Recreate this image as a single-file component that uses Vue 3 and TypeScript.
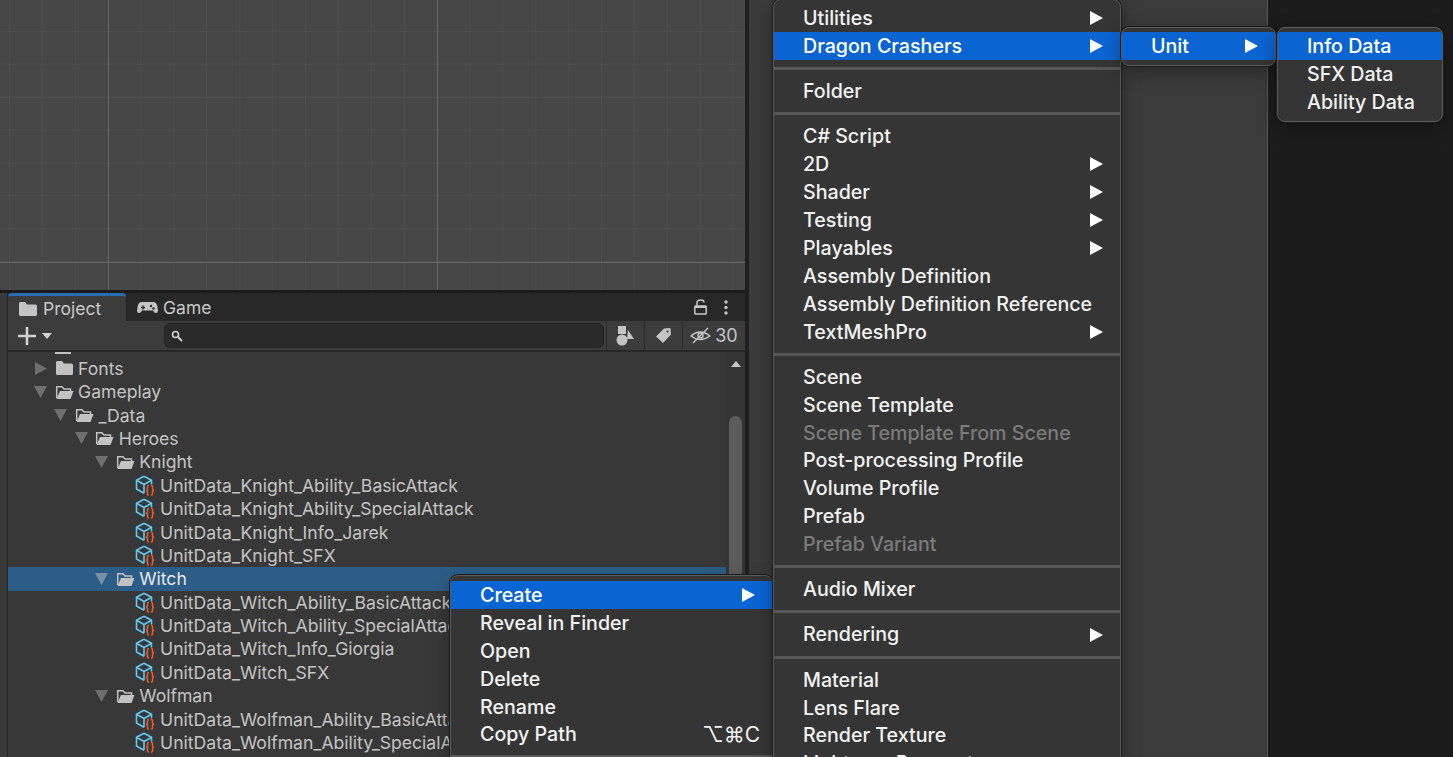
<script setup lang="ts">
type Row = { label: string; depth: number; kind: 'closed' | 'open' | 'asset'; arrow?: 'right' | 'down'; selected?: boolean };
type Item = { label?: string; sep?: boolean; arrow?: boolean; active?: boolean; disabled?: boolean; shortcut?: string };

const rows: Row[] = [
  { label: 'Fonts', depth: 0, kind: 'closed', arrow: 'right' },
  { label: 'Gameplay', depth: 0, kind: 'open', arrow: 'down' },
  { label: '_Data', depth: 1, kind: 'open', arrow: 'down' },
  { label: 'Heroes', depth: 2, kind: 'open', arrow: 'down' },
  { label: 'Knight', depth: 3, kind: 'open', arrow: 'down' },
  { label: 'UnitData_Knight_Ability_BasicAttack', depth: 4, kind: 'asset' },
  { label: 'UnitData_Knight_Ability_SpecialAttack', depth: 4, kind: 'asset' },
  { label: 'UnitData_Knight_Info_Jarek', depth: 4, kind: 'asset' },
  { label: 'UnitData_Knight_SFX', depth: 4, kind: 'asset' },
  { label: 'Witch', depth: 3, kind: 'open', arrow: 'down', selected: true },
  { label: 'UnitData_Witch_Ability_BasicAttack', depth: 4, kind: 'asset' },
  { label: 'UnitData_Witch_Ability_SpecialAttack', depth: 4, kind: 'asset' },
  { label: 'UnitData_Witch_Info_Giorgia', depth: 4, kind: 'asset' },
  { label: 'UnitData_Witch_SFX', depth: 4, kind: 'asset' },
  { label: 'Wolfman', depth: 3, kind: 'open', arrow: 'down' },
  { label: 'UnitData_Wolfman_Ability_BasicAttack', depth: 4, kind: 'asset' },
  { label: 'UnitData_Wolfman_Ability_SpecialAttack', depth: 4, kind: 'asset' },
];

const createMenu: Item[] = [
  { label: 'Utilities', arrow: true },
  { label: 'Dragon Crashers', arrow: true, active: true },
  { sep: true },
  { label: 'Folder' },
  { sep: true },
  { label: 'C# Script' },
  { label: '2D', arrow: true },
  { label: 'Shader', arrow: true },
  { label: 'Testing', arrow: true },
  { label: 'Playables', arrow: true },
  { label: 'Assembly Definition' },
  { label: 'Assembly Definition Reference' },
  { label: 'TextMeshPro', arrow: true },
  { sep: true },
  { label: 'Scene' },
  { label: 'Scene Template' },
  { label: 'Scene Template From Scene', disabled: true },
  { label: 'Post-processing Profile' },
  { label: 'Volume Profile' },
  { label: 'Prefab' },
  { label: 'Prefab Variant', disabled: true },
  { sep: true },
  { label: 'Audio Mixer' },
  { sep: true },
  { label: 'Rendering', arrow: true },
  { sep: true },
  { label: 'Material' },
  { label: 'Lens Flare' },
  { label: 'Render Texture' },
  { label: 'Lightmap Parameters' },
];

const contextMenu: Item[] = [
  { label: 'Create', arrow: true, active: true },
  { label: 'Reveal in Finder' },
  { label: 'Open' },
  { label: 'Delete' },
  { label: 'Rename' },
  { label: 'Copy Path', shortcut: '⌥⌘C' },
  { sep: true },
];

const unitMenu: Item[] = [{ label: 'Unit', arrow: true, active: true }];
const dataMenu: Item[] = [
  { label: 'Info Data', active: true },
  { label: 'SFX Data' },
  { label: 'Ability Data' },
];

const menus = [
  { id: 'menu-context', items: contextMenu },
  { id: 'menu-create', items: createMenu },
  { id: 'menu-unit', items: unitMenu },
  { id: 'menu-data', items: dataMenu },
];
</script>

<template>
  <div class="page">
    <div class="left">
      <div class="scene"></div>
      <div class="panel">
        <div class="tabs">
          <div class="tab tab-on">
            <svg width="18" height="16" viewBox="0 0 18 16"><path d="M0 2.500Q0 1 1.500 1H6l2 2.500h8.500q1.500 0 1.500 1.500V13.500q0 1.500-1.500 1.500h-15Q0 15 0 13.500z" fill="#c4c4c4" /></svg>
            <span>Project</span>
          </div>
          <div class="tab">
            <svg width="21" height="13" viewBox="0 0 21 13"><path d="M5 1h11q3.500 0 4.300 4l.7 4.500q0 2.500-2.200 2.500-1.500 0-2.800-2.500H5q-1.300 2.500-2.800 2.500Q0 12 0 9.500L.7 5Q1.500 1 5 1z" fill="#c4c4c4" /><path d="M4 6.500h4M6 4.500v4" stroke="#282828" stroke-width="1.400" /><circle cx="14" cy="5" r="1.200" fill="#282828" /><circle cx="16.500" cy="7.500" r="1.200" fill="#282828" /></svg>
            <span>Game</span>
          </div>
          <div class="tab-tools">
            <svg width="13" height="16" viewBox="0 0 13 16" fill="none" stroke="#c8c8c8" stroke-width="1.500"><path d="M3 7V4q0-3 3.500-3T10 3.500" /><rect x=".8" y="7" width="11.400" height="8" rx=".8" /><path d="M1 8h11" stroke-width="2" /></svg>
            <svg width="4" height="15" viewBox="0 0 4 15" fill="#c4c4c4"><circle cx="2" cy="2" r="1.700" /><circle cx="2" cy="7.500" r="1.700" /><circle cx="2" cy="13" r="1.700" /></svg>
          </div>
        </div>
        <div class="toolbar">
          <svg class="plus" width="18" height="18" viewBox="0 0 18 18"><path d="M9 0v18M0 9h18" stroke="#d2d2d2" stroke-width="2.600" /></svg>
          <svg class="caret" width="10" height="6" viewBox="0 0 10 6"><path d="M0 0h10L5 6z" fill="#d2d2d2" /></svg>
          <div class="search">
            <svg width="12" height="12" viewBox="0 0 12 12" fill="none" stroke="#d0d0d0"><circle cx="4.500" cy="4.500" r="3" stroke-width="1.600" /><path d="M7 7l4 4" stroke-width="2" /></svg>
          </div>
          <div class="tool tool-a">
            <svg width="19" height="20" viewBox="0 0 19 20" fill="#c4c4c4"><rect x="2" y="0" width="8" height="8" /><path d="M12 4l6 9h-7z" /><circle cx="6" cy="14" r="5.500" /></svg>
          </div>
          <div class="tool tool-b">
            <svg width="15" height="15" viewBox="0 0 15 15"><path fill-rule="evenodd" d="M8 .5L14.500 0 15 6.500 7 15 0 8.500zM11.500 2.500a1 1 0 1 0 .01 0z" fill="#c4c4c4" /></svg>
          </div>
          <div class="tool tool-c">
            <svg width="21" height="17" viewBox="0 0 21 17" fill="none" stroke="#c4c4c4" stroke-width="1.400"><path d="M1 9q9-8 19 0-10 7-19 0z" /><circle cx="10.500" cy="8.500" r="2.500" /><path d="M3 16L18 1" /></svg>
            <span>30</span>
          </div>
        </div>
        <div class="body">
          <div class="tree">
            <div class="stub"></div>
            <div v-for="row in rows" :key="row.label" class="row" :class="{ selected: row.selected }" :style="{ paddingLeft: 31.5 + row.depth * 20.4 + 'px' }">
              <span class="twist">
                <svg v-if="row.arrow === 'right'" width="12" height="13" viewBox="0 0 12 13"><path d="M0 0l12 6.500L0 13z" fill="#6f6f6f" /></svg>
                <svg v-else-if="row.arrow === 'down'" width="13" height="12" viewBox="0 0 13 12"><path d="M0 0h13L6.500 12z" :fill="row.selected ? '#7b90a4' : '#6f6f6f'" /></svg>
              </span>
              <svg v-if="row.kind === 'closed'" class="icon" width="19" height="16" viewBox="0 0 19 16"><path d="M1 2.500Q1 1 2.500 1H7l2 2.500h7.500q1.500 0 1.500 1.500v8.500q0 1.500-1.500 1.500h-14Q1 15 1 13.500z" fill="#c2c2c2" /></svg>
              <svg v-else-if="row.kind === 'open'" class="icon" width="19" height="16" viewBox="0 0 19 16"><path d="M1.700 14V2.700H7L9 5h6.500v2.500" fill="none" stroke="#c2c2c2" stroke-width="1.500" /><path d="M5 7h13.500L15.500 15H1.500z" fill="#c2c2c2" /></svg>
              <svg v-else class="icon asset" width="21" height="21" viewBox="0 0 21 21" fill="none">
                <g stroke="#62c8f0" stroke-width="1.600" stroke-linejoin="round"><path d="M9 1.200L16.500 5.300V9.500M9 1.200L1.500 5.300V14L9 18.300" /><path d="M1.500 5.300L9 9.500L16.500 5.300M9 9.500V18.300" /></g>
                <g stroke="#f05a28" stroke-width="1.500"><path d="M14 10.500h-.5q-1 0-1 1v2.500q0 1-1.500 1.200 1.500.3 1.500 1.300v2.500q0 1 1 1h.5M16 10.500h.5q1 0 1 1v2.500q0 1 1.500 1.200-1.500.3-1.500 1.300v2.500q0 1-1 1H16" /></g>
              </svg>
              <span class="name">{{ row.label }}</span>
            </div>
          </div>
          <div class="scrollbar">
            <svg width="10" height="6" viewBox="0 0 10 6"><path d="M5 0l5 6H0z" fill="#c8c8c8" /></svg>
            <div class="thumb"></div>
          </div>
        </div>
      </div>
    </div>
    <div class="divider"></div>
    <div class="middle"></div>
    <div class="desktop"></div>

    <div v-for="menu in menus" :key="menu.id" class="menu" :class="menu.id">
      <template v-for="(item, i) in menu.items" :key="i">
        <div v-if="item.sep" class="sep"></div>
        <div v-else class="item" :class="{ active: item.active, disabled: item.disabled }">
          <span>{{ item.label }}</span>
          <span v-if="item.shortcut" class="shortcut">{{ item.shortcut }}</span>
          <svg v-if="item.arrow" class="chev" width="13" height="14" viewBox="0 0 13 14"><path d="M0 0l13 7L0 14z" fill="#fff" /></svg>
        </div>
      </template>
    </div>
  </div>
</template>

<style>
html, body { margin: 0; background: #1c1c1c; }
</style>

<style scoped>
.page {
  position: relative;
  display: flex;
  width: 1453px;
  height: 757px;
  overflow: hidden;
  font-family: Inter, "DejaVu Sans", sans-serif;
  background: #1c1c1c;
}
.left {
  width: 745px;
  display: flex;
  flex-direction: column;
  background: #3a3a3a;
}
.scene {
  height: 290px;
  flex: none;
  border-bottom: 3px solid #1b1b1b;
  background-color: #474747;
  background-image:
    linear-gradient(90deg, #666 1px, transparent 1px),
    linear-gradient(0deg, #666 1px, transparent 1px),
    linear-gradient(90deg, #4e4e4e 1px, transparent 1px),
    linear-gradient(0deg, #4e4e4e 1px, transparent 1px);
  background-size: 329px 100%, 100% 329px, 32.900px 100%, 100% 32.900px;
  background-position: 108px 0, 0 -66px, 9px 0, 0 -1px;
}
.panel {
  flex: 1;
  margin-left: 7px;
  display: flex;
  flex-direction: column;
  min-height: 0;
  background: #383838;
  border-left: 1px solid #242424;
}
.tabs {
  height: 28px;
  flex: none;
  display: flex;
  background: #282828;
  color: #c8c8c8;
  font-size: 17.500px;
}
.tab {
  display: flex;
  align-items: center;
  gap: 6px;
  padding-left: 11px;
  width: 118px;
  box-sizing: border-box;
}
.tab-on {
  background: #3c3c3c;
  border-top: 3px solid #2a6cb0;
  border-radius: 4px 4px 0 0;
}
.tab:not(.tab-on) {
  gap: 5px;
}
.tab-tools {
  margin-left: auto;
  display: flex;
  align-items: center;
  gap: 17px;
  padding-right: 17px;
}
.toolbar {
  height: 29px;
  flex: none;
  display: flex;
  align-items: center;
  background: #3c3c3c;
  border-bottom: 2px solid #272727;
}
.plus {
  margin-left: 10px;
}
.caret {
  margin-left: 6px;
}
.search {
  flex: 1;
  height: 23px;
  margin-left: 112px;
  display: flex;
  align-items: center;
  padding-left: 6px;
  background: #2a2a2a;
  border: 1px solid #232323;
  border-radius: 6px;
}
.tool {
  height: 100%;
  display: flex;
  align-items: center;
  justify-content: center;
  border-left: 1px solid #2a2a2a;
  box-sizing: border-box;
  color: #c4c4c4;
  font-size: 18px;
}
.tool-a { width: 38px; margin-left: 2px; }
.tool-b { width: 38px; }
.tool-c { width: 63px; gap: 4px; }
.body {
  flex: 1;
  display: flex;
  min-height: 0;
}
.tree {
  flex: 1;
  min-width: 0;
  overflow: hidden;
}
.stub {
  width: 16px;
  height: 2px;
  margin: 0 0 2.600px 47px;
  background: #c2c2c2;
}
.row {
  height: 23.400px;
  display: flex;
  align-items: center;
  box-sizing: border-box;
  color: #c4c4c4;
  font-size: 17.600px;
  white-space: nowrap;
}
.row.selected {
  background: #2c5d87;
  color: #e8e8e8;
}
.twist {
  width: 14px;
  flex: none;
  display: flex;
  align-items: center;
  justify-content: center;
  margin-left: -6px;
}
.icon {
  margin-left: 7px;
  flex: none;
}
.icon.asset {
  margin-left: 5.500px;
}
.name {
  margin-left: 4.500px;
}
.scrollbar {
  width: 19px;
  flex: none;
  display: flex;
  flex-direction: column;
  align-items: center;
  background: #353535;
  padding-top: 9px;
}
.thumb {
  width: 13px;
  height: 220px;
  margin-top: 49px;
  border-radius: 7px;
  background: #5c5c5c;
}
.divider {
  width: 4px;
  flex: none;
  background: #1f1f1f;
}
.middle {
  width: 518px;
  flex: none;
  background: #3b3b3b;
  border-right: 1px solid #565656;
}
.desktop {
  flex: 1;
  background: #1c1c1c;
}
.menu {
  position: absolute;
  box-sizing: border-box;
  background: #353535;
  border: 1px solid #5a5a5a;
  border-radius: 8px;
  box-shadow: 0 0 0 1px #1c1c1c, 0 6px 18px rgba(0, 0, 0, 0.35);
  color: #f2f2f2;
  font-size: 19.650px;
  font-weight: 500;
  overflow: hidden;
}
.menu-context { left: 450px; top: 575px; width: 323px; padding-top: 5px; height: 240px; }
.menu-create { left: 773px; top: -1px; width: 348px; padding-top: 4.200px; }
.menu-unit { left: 1121px; top: 27px; width: 155px; padding: 4px 0 5px; }
.menu-data { left: 1277px; top: 27px; width: 166px; padding: 4px 0 5px; }
.item {
  position: relative;
  height: 27.900px;
  display: flex;
  align-items: center;
  padding-left: 29px;
  white-space: nowrap;
}
.item.active {
  background: #0a64d2;
  color: #fff;
}
.item.disabled {
  color: #7b7b7b;
}
.chev {
  position: absolute;
  right: 17px;
  top: 7px;
}
.shortcut {
  position: absolute;
  right: 12px;
  top: 2px;
  font-size: 21px;
  font-weight: 400;
}
.sep {
  height: 3px;
  margin: 7.150px 0;
  background: #565656;
}
</style>
